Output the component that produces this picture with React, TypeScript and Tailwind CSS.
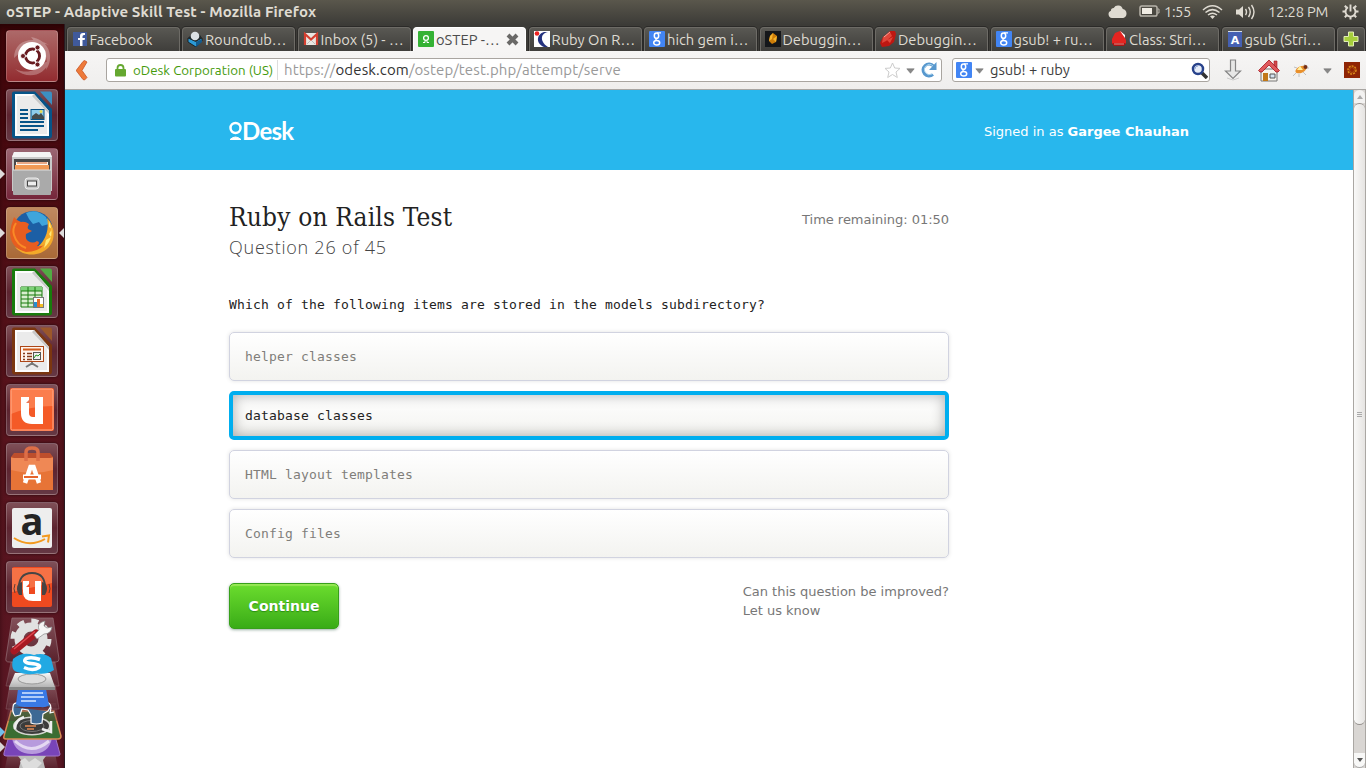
import React from "react";

type Kids = { children?: React.ReactNode };

/* ---------- top panel ---------- */

function TopPanel() {
  return (
    <header className="flex h-6 shrink-0 items-center bg-linear-to-b from-[#5a574c] to-[#3d3c38] pl-[6px] pr-[7px] font-['Ubuntu','Noto_Sans',sans-serif] text-[#dfdbd2]">
      <h1 className="whitespace-nowrap text-[15px] font-bold leading-6 tracking-[0.12px]">oSTEP - Adaptive Skill Test - Mozilla Firefox</h1>
      <div className="ml-auto flex items-center">
        <svg width="19" height="15" viewBox="0 0 19 15" fill="#dfdbd2">
          <path d="M4 14a3.8 3.8 0 0 1-1.100-7.300A2.800 2.800 0 0 1 5.700 4 5 5 0 0 1 14.800 5.100a4.600 4.600 0 0 1 .5 8.900z" />
        </svg>
        <svg className="-mt-px ml-3" width="21" height="12" viewBox="0 0 21 12" fill="none">
          <rect x="1" y="1" width="17" height="10" rx="1.800" stroke="#b8b4aa" strokeWidth="1.500" />
          <rect x="3" y="3" width="10" height="6" fill="#f1ede4" />
          <path d="M18.500 4h1.500v4h-1.500" stroke="#b8b4aa" />
        </svg>
        <span className="ml-[4px] w-[27px] whitespace-nowrap text-[14.7px] tracking-[-0.4px]">1:55</span>
        <svg className="ml-[11px]" width="21" height="16" viewBox="0 0 21 16" fill="none" stroke="#dfdbd2" strokeWidth="1.500">
          <path d="M1 6Q10.500-2.500 20 6" />
          <path d="M3.500 8.500q7-5.800 14 0" />
          <path d="M6 11q4.500-3.600 9 0" />
          <path d="M8 12.300q2.500-1.500 5 0l-2.500 2.800z" fill="#dfdbd2" stroke="none" />
        </svg>
        <svg className="ml-3" width="21" height="16" viewBox="0 0 21 16" fill="none" stroke="#dfdbd2" strokeWidth="1.400">
          <path d="M1 5.500h3l4-3.500v12l-4-3.500H1z" fill="#dfdbd2" stroke="none" />
          <path d="M10.500 5q2 3 0 6M13.500 3q3.500 5 0 10M16.500 1q5 7 0 14" />
        </svg>
        <span className="ml-[12px] w-[61px] whitespace-nowrap text-[14.7px] tracking-[-0.2px]">12:28 PM</span>
        <svg className="ml-[13px]" width="17" height="17" viewBox="0 0 17 17" fill="none" stroke="#dfdbd2">
          <path d="M6 4.300a5 5 0 1 0 5 0M8.500 1.500v7" strokeWidth="1.900" />
          <path d="M3.500 8.500H.5M16.500 8.500h-3M5 12l-2.200 2.200M12 12l2.200 2.200M8.500 13.500v3M4.800 4.800 2.800 2.800M12.200 4.800l2-2" strokeWidth="2" />
        </svg>
      </div>
    </header>
  );
}

/* ---------- launcher ---------- */

function Tile({ tone, children }: Kids & { tone: string }) {
  return (
    <div className={`h-[52px] w-[52px] shrink-0 rounded-[4px] border border-white/20 shadow-[0_0_3px_rgba(0,0,0,0.6)] ${tone}`}>
      <svg className="-ml-px -mt-px block overflow-visible" width="52" height="52" viewBox="0 0 52 52">{children}</svg>
    </div>
  );
}

function Doc({ color, corner, children }: Kids & { color: string; corner: string }) {
  return (
    <>
      <path d="M8 2.500q-2 0-2 2v42q0 3 2.500 3H43q3 0 3-3V20L29 2.500z" fill={color} />
      <path d="M9 5H28L43 22v25H9z" fill="#fdfdfd" />
      <path d="M11 7h16l14 17v21H11z" fill="#ebebeb" />
      <path d="M28 5l15 17v3L26 7z" fill="#c8c8c8" />
      <path d="M34 2.500h10q2 0 2 2V16z" fill={corner} />
      {children}
    </>
  );
}

const glass = "bg-linear-to-b from-[#7f5058] via-[#5d2430] to-[#653844]";

function FoldedStack() {
  return (
    <svg className="block shrink-0" width="65" height="152" viewBox="0 0 65 152">
      <defs>
        <linearGradient id="pane" x2="0" y2="1">
          <stop stopColor="#9a7078" stopOpacity=".65" />
          <stop offset="1" stopColor="#5a2832" stopOpacity=".65" />
        </linearGradient>
        <linearGradient id="silver" x2="0" y2="1">
          <stop stopColor="#f7f7f7" />
          <stop offset="1" stopColor="#b5b5b5" />
        </linearGradient>
      </defs>
      <path d="M9 132h45l4 20H5z" fill="url(#pane)" />
      <path d="M9 120h46l5 18q0 2-2 2H6q-3 0-2-3z" fill="#7844b8" stroke="#a274c5" />
      <path d="M12 122h40q-3 16-20 16t-20-16z" fill="#b79add" />
      <path d="M15 125q16 15 34 0" stroke="#e4d8f2" strokeWidth="3" fill="none" />
      <path d="M18 140h28l-3 4 2 8H19l2-8z" fill="#bdbdbd" />
      <path d="M20 145l5-3 4 4 6-4 7 5-5 5H23z" fill="#dddddd" />
      <path d="M11 95h43l7 25q0 3-3 3H6q-3 0-2-3z" fill="#3a6d32" stroke="#d98a54" strokeWidth="1.500" />
      <path d="M9 87h47l3 18H6z" fill="url(#pane)" opacity=".5" />
      <path d="M10 68h45l4 25H6z" fill="url(#pane)" stroke="#8d626a" strokeWidth=".5" />
      <path d="M11 46h44l4 24H6z" fill="url(#pane)" stroke="#8d626a" strokeWidth=".5" />
      <ellipse cx="32" cy="110" rx="19" ry="9.500" fill="#d3d5d0" />
      <ellipse cx="32" cy="110" rx="17" ry="8" fill="#3b3c3b" />
      <ellipse cx="32" cy="110" rx="12" ry="5.500" fill="none" stroke="#777" />
      <path d="M25 110h11M27 113h7" stroke="#e28b56" strokeWidth="1.500" />
      <path d="M51 105v11l-9-3M15 113q0-9 9-12" stroke="#eeeeee" strokeWidth="2.500" fill="none" />
      <path d="M13 91q0-5 6-4l6 3q6-4 13-1l7-3q6 0 6 6l-1 5 4-1M13 91q-1 5 2 9l5-1 2-6 6 1 3 5 0 8q5 2 11 0l1-9 5-3 3-5" fill="#3d6994" stroke="#fff" strokeWidth="1.200" strokeLinejoin="round" />
      <path d="M18 73h28l3 16q-4 3-8 2l-15 0q-7 0-10-3z" fill="#3979e5" />
      <path d="M22 77h21M21 81h23M21 85h15" stroke="#d8e7ff" strokeWidth="1.500" />
      <path d="M15 57h35l5 14H9z" fill="url(#silver)" />
      <path d="M9 71h46v3H9z" fill="#858585" />
      <ellipse cx="32" cy="63" rx="14" ry="5" fill="#ddd" stroke="#999" />
      <path d="M12 2h41l6 41q0 3-3 3H9q-4 0-3-4z" fill="url(#pane)" stroke="#95727a" strokeWidth=".7" />
      <circle cx="31" cy="23" r="12" fill="none" stroke="#e1e1e1" strokeWidth="9" />
      <circle cx="31" cy="23" r="18" fill="none" stroke="#e1e1e1" strokeWidth="5" strokeDasharray="7 7.100" />
      <path d="M14 35 36 17" stroke="#a71922" strokeWidth="7" strokeLinecap="round" />
      <path d="M14 33 35 15.500" stroke="#de4850" strokeWidth="1.500" />
      <path d="M34 19l5-5q-2-6 3-8l3-1-1 5 3 2 5-1q-1 7-8 7l-7 5z" fill="#f5f5f5" stroke="#888" strokeWidth=".7" />
      <path d="M13 43q9-8 21-4 10-3 17 3l3 12q-8 5-17 3.500-9 2-18-1-9-1-6-13.500z" fill="#22a9e3" />
      <path d="M40 43.500q-8-3-14-1-4 4 5 5 11 1 8 4-6 4-15 0" stroke="#fff" strokeWidth="3.500" fill="none" />
      <path d="M0 111l5 5-5 5z" fill="#72c0ed" />
      <path d="M0 126l5 5-5 5z" fill="#d8d5d5" />
    </svg>
  );
}

function Pip({ side }: { side: "left" | "right" }) {
  return (
    <svg className={side === "left" ? "absolute -left-[6px] top-[21px]" : "absolute -right-[6px] top-[21px]"} width="5" height="10" viewBox="0 0 5 10">
      <path d={side === "left" ? "M0 0l5 5-5 5z" : "M5 0L0 5l5 5z"} fill="#dedbdb" />
    </svg>
  );
}

function Launcher() {
  return (
    <nav className="flex w-[65px] shrink-0 flex-col border-r border-[#281b22] bg-linear-to-b from-[#410509] via-[#58131c] to-[#591724] shadow-[inset_0_4px_5px_rgba(20,0,0,0.5)]">
      <div className="flex flex-col gap-[7px] pb-[3px] pl-[6px] pt-[6px]">
        <Tile tone="bg-linear-to-b from-[#ad6969] to-[#922b30]">
          <path d="M8 28C8 10 27 5 43 15q-14-6-23 2M25 7c18 3 24 20 15 33 3-13-2-19-8-24M44 30C38 48 20 49 9 39c12 5 20 2 25-4" fill="#fff" opacity=".27" />
          <circle cx="26" cy="26" r="14" fill="#fff" />
          <circle cx="26.500" cy="26" r="7" fill="none" stroke="#681b20" strokeWidth="3" />
          <path d="M25 26l-9 0M26 26l5-8M26 26l5 8" stroke="#fff" strokeWidth="1.600" />
          <circle cx="26.500" cy="26" r="5.300" fill="#fff" />
          <g fill="#681b20" stroke="#fff" strokeWidth=".8"><circle cx="17" cy="26" r="2.500" /><circle cx="31.500" cy="17.500" r="2.500" /><circle cx="31.500" cy="34.500" r="2.500" /></g>
        </Tile>
        <Tile tone={glass}>
          <Doc color="#075488" corner="#3c8fc1">
            <path d="M14 21h8M14 25h8M14 29h8M14 33h24M14 37h24M14 41h18" stroke="#075488" strokeWidth="2" />
            <rect x="25" y="20.500" width="13" height="10" fill="#8dccec" stroke="#075488" />
            <path d="M26 30v-3l4-3 3 2 2-2 3 4v2z" fill="#454b4c" /><circle cx="35" cy="22.500" r="1.500" fill="#e8db54" />
          </Doc>
        </Tile>
        <div className="relative h-[52px] w-[52px]">
          <Tile tone="bg-linear-to-b from-[#9a6672] to-[#75253a]">
            <path d="M8 4h36l2 5v34H6V9z" fill="#c9c9c9" /><path d="M8 4h36l2 5H6z" fill="#f4f4f4" />
            <path d="M8 11h36v12H8z" fill="#4a4848" /><path d="M10 14h32v9H10z" fill="#fff6ed" /><path d="M9 17h34v6H9z" fill="#f29a55" /><path d="M11 15h30" stroke="#d55f23" />
            <path d="M7 22h38v24q0 1-1 1H8q-1 0-1-1z" fill="#aaa" /><path d="M7 22h38" stroke="#ddd" />
            <rect x="19" y="30" width="14" height="11" rx="3" fill="#c7c7c7" stroke="#ededed" /><rect x="21.500" y="33" width="9" height="5" fill="#eee" stroke="#444" />
          </Tile>
          <Pip side="left" />
        </div>
        <div className="relative h-[52px] w-[52px]">
          <Tile tone="bg-linear-to-b from-[#bf8960] to-[#a96937]">
            <circle cx="27" cy="24" r="20" fill="#1c5fa5" />
            <path d="M20 6q10-5 20 4l3 7-7 2-3-4-6 2-4-5z" fill="#3fa5dc" />
            <path d="M41 11c8 8 9 21 2 29-9 10-26 10-34 0 13 7 22 3 28-6 4-6 6-14 4-23z" fill="#f4a929" />
            <path d="M43 14q7 16-5 27l2-8 5-3-2-3 3-5-3-2z" fill="#ffe977" />
            <path d="M8 10q3 4 7 5 4-1 8 2 -2 3-1 5l4 2-6 3q-1 5 2 7 5 3 9 0 4 1 0 5 5 1 8-2Q32 45 20 45 4 41 4 25q1-7 4-15z" fill="#e75d20" />
            <path d="M10 16q-4 6-2 12 3 10 12 13" fill="none" stroke="#fa8a26" strokeWidth="2" />
          </Tile>
          <Pip side="left" /><Pip side="right" />
        </div>
        <Tile tone={glass}>
          <Doc color="#187b0c" corner="#52ac44">
            <path d="M15 21h21v20H15z" fill="#d9efcf" stroke="#187b0c" /><path d="M15 21h21v4H15z" fill="#7fd17a" /><path d="M15 25h21M15 29h21M15 33h21M15 37h21M22 21v20M29 21v20" stroke="#187b0c" />
            <rect x="27.500" y="31.500" width="10" height="10" fill="white" stroke="#777" /><path d="M28 36h3v5h-3z" fill="#258fd0" /><path d="M31 33h3v8h-3z" fill="#e46c27" /><path d="M34 38h3v3h-3z" fill="#f2bd24" />
          </Doc>
        </Tile>
        <Tile tone={glass}>
          <Doc color="#7b3610" corner="#9b572a">
            <rect x="14.500" y="21.500" width="23" height="15" fill="#fff4ec" stroke="#ad4616" /><path d="M17 24.500h18" stroke="#cf5a1b" strokeWidth="2" />
            <path d="M17 28.500h2m2 0h5m-9 3h2m2 0h5m-9 3h2m2 0h5" stroke="#843a19" strokeWidth="1.500" /><rect x="27.500" y="27.500" width="7" height="7" fill="#eee" stroke="#555" /><path d="M28 33l2-3 2 1 2-2" fill="none" stroke="#21961f" /><path d="M26 37v3m-6 2l5-3h2l5 3" stroke="#777" strokeWidth="2" fill="none" />
          </Doc>
        </Tile>
        <Tile tone={glass}>
          <rect x="4" y="4" width="44" height="43" rx="2" fill="#f45a27" /><path d="M5 5h42v17Q25 22 5 30z" fill="#ff9162" opacity=".65" /><rect x="5" y="5" width="42" height="41" rx="1.500" fill="none" stroke="#ffad8c" />
          <path d="M15 13h8v5h-3l3-3v14q0 4 4 4h2V13h8v27H26q-11 0-11-11z" fill="#fff" /><path d="M20 19l4-4v4z" fill="#e97754" />
        </Tile>
        <Tile tone={glass}>
          <path d="M5 14h42v33H5z" fill="#e77437" /><path d="M5 14l3-4h36l3 4-3 1H8z" fill="#bd4e2c" /><path d="M5 15h42v12q-20 6-42 0z" fill="#ef8855" />
          <path d="M20 18V9q0-4 6-4t6 4v9" stroke="#dd6e47" strokeWidth="3.500" fill="none" />
          <path d="M19 40l5.500-16h3L33 40" stroke="#fff" strokeWidth="4.500" fill="none" /><path d="M17 34h18" stroke="#fff" strokeWidth="5" /><path d="M18 34h14" stroke="#e6642b" strokeWidth="2" />
        </Tile>
        <Tile tone={glass}>
          <rect x="6" y="6" width="40" height="40" rx="2" fill="#eee" />
          <text x="26" y="33" textAnchor="middle" fontFamily="Open Sans, sans-serif" fontWeight="700" fontSize="38" fill="#242424">a</text>
          <path d="M8 36q15 10 31 1M36 34.500l7-1-1 7" fill="none" stroke="#f39a20" strokeWidth="2" />
        </Tile>
        <Tile tone={glass}>
          <rect x="6" y="6" width="40" height="40" rx="2" fill="#ef4a20" /><path d="M6 7h40v15L6 31z" fill="#fa8255" opacity=".7" />
          <path d="M17 20h6v13h6V20h6v20h-8q-10 0-10-9z" fill="#fff" /><path d="M20 26l4-4v4z" fill="#f4522b" /><path d="M13 29q-1-17 13-17t13 17" stroke="#454545" strokeWidth="2" fill="none" /><path d="M13 22q-4 5 0 12h3V21zM39 22q4 5 0 12h-3V21z" fill="#484343" /><path d="M9 23q-2 5 0 9M43 23q2 5 0 9" stroke="#5c3d36" fill="none" />
        </Tile>
      </div>
      <FoldedStack />
    </nav>
  );
}

/* ---------- site icons ---------- */

function GoogleIcon() {
  return (
    <svg width="16" height="16" viewBox="0 0 16 16">
      <rect width="16" height="16" rx="1" fill="#4285f4" />
      <ellipse cx="7.500" cy="4.700" rx="2.200" ry="2.600" stroke="#fff" strokeWidth="1.500" fill="none" />
      <path d="M8 1.900h4M7.500 7.300q-1.500 1 .5 2" stroke="#fff" strokeWidth="1.300" fill="none" />
      <ellipse cx="7.700" cy="11.700" rx="3" ry="2.300" stroke="#fff" strokeWidth="1.500" fill="none" />
    </svg>
  );
}

const siteIcons: Record<string, React.ReactNode> = {
  facebook: <svg width="14" height="14" viewBox="0 0 14 14"><path fill="#405a9b" d="M0 0h14v14H0z" /><path fill="#fff" d="M7 14V8H5V6h2V4q0-3 3-3h2v2h-1q-1.500 0-1.500 1.500V6H12l-.4 2H9.500v6z" /></svg>,
  cube: <svg width="16" height="16" viewBox="0 0 16 16"><path d="M1 7l7 3 7-3v3l-6 6-8-5z" fill="#2c9ad6" stroke="#111" strokeWidth=".8" /><path d="M1 7l4-4 8 1 2 3-6 4z" fill="#22292c" /><circle cx="8" cy="5" r="4.300" fill="#dce1e4" /><path d="M9 11v5l6-5V8z" fill="#135b8e" /></svg>,
  mail: <svg width="16" height="14" viewBox="0 0 16 14"><path d="M1 1h14v12H1z" fill="#e9e7e2" /><path d="M2 13V2l6 5.500L14 2v11" fill="none" stroke="#d54031" strokeWidth="2.200" /><path d="M4 12l3-3M12 12L9 9" stroke="#bbb" /></svg>,
  ostep: <svg width="16" height="16" viewBox="0 0 16 16"><rect width="16" height="16" rx="1" fill="#35b234" /><circle cx="8" cy="7" r="2.400" fill="none" stroke="#fff" strokeWidth="1.300" /><path d="M5 11.500h2V10m4 1.500H9V10" stroke="#fff" fill="none" /></svg>,
  rails: <svg width="16" height="16" viewBox="0 0 16 16"><path fill="#fff" d="M0 0h16v16H0z" /><path d="M14 1C7 2 5 10 14 16h-4C1 12 3 3 10 1z" fill="#24327e" /><circle cx="3" cy="2.500" r="2.300" fill="#ee2222" /></svg>,
  google: <GoogleIcon />,
  amber: <svg width="16" height="16" viewBox="0 0 16 16"><path fill="#15171a" d="M0 0h16v16H0z" /><path d="M8 2l4 3-1 6-4 2-3-3 1-5z" fill="#cc7c08" /><path d="M8 2l-1 6-3 2 1-5zM8 8l3 3 1-6z" fill="#f5b42d" /></svg>,
  ruby: <svg width="16" height="16" viewBox="0 0 16 16"><path d="M10 0h5l1 3-2 8-5 4-7 1-2-4 3-6z" fill="#bd1712" /><path d="M10 1l2 4-6 5-4 2 1-6zM13 6l-3 6-3-3z" fill="#e0463a" /><path d="M4 6l6-5" stroke="#f2a49a" /></svg>,
  class: <svg width="16" height="16" viewBox="0 0 16 16"><path d="M4 2l5-2 2 1 4 8v4H1V8z" fill="#e42420" /><path d="M9 0l5 4v3z" fill="#fff" /><path d="M1 12h14l-2 3H3z" fill="#a81515" /><path d="M3 13h10" stroke="#ef8a84" /></svg>,
  letter: <svg width="16" height="16" viewBox="0 0 16 16"><path fill="#4560b2" d="M1 1h14v15H1z" /><path d="M1 .5h14" stroke="#d8dfe8" /><text x="8" y="13" textAnchor="middle" fontFamily="DejaVu Sans" fontSize="11" fontWeight="bold" fill="#fff">A</text></svg>,
};

const tabs = [
  { icon: "facebook", title: "Facebook" },
  { icon: "cube", title: "Roundcub…" },
  { icon: "mail", title: "Inbox (5) - …" },
  { icon: "ostep", title: "oSTEP -…", active: true },
  { icon: "rails", title: "Ruby On R…" },
  { icon: "google", title: "hich gem i…" },
  { icon: "amber", title: "Debuggin…" },
  { icon: "ruby", title: "Debuggin…" },
  { icon: "google", title: "gsub! + ru…" },
  { icon: "class", title: "Class: Stri…" },
  { icon: "letter", title: "gsub (Stri…" },
];

const tabShape = "flex h-6 items-center whitespace-nowrap rounded-t-[4px] border border-b-0";
const darkTab = "border-[#6d6b66] bg-linear-to-b from-[#595853] to-[#3f3e3b] text-[#dfdbd2] shadow-[0_0_0_1px_#2b2a28]";
const lightTab = "border-white bg-[#f6f5f4] text-[#4c4c4c]";

function TabStrip() {
  return (
    <div className="flex h-[27px] shrink-0 items-end gap-[2.5px] overflow-hidden bg-[#3c3b37] pl-[1.5px] font-['Ubuntu','Noto_Sans',sans-serif] text-[14.7px]">
      {tabs.map((t, i) => (
        <div key={i} className={`${tabShape} w-[113px] shrink-0 pl-1 ${t.active ? lightTab : darkTab}`}>
          <span className="mb-[2px] flex w-[16px] shrink-0 justify-center">{siteIcons[t.icon]}</span>
          <span className="ml-[2px] mt-px tracking-[0px]">{t.title}</span>
          {t.active && (
            <svg className="mb-px ml-auto mr-[6px]" width="13" height="13" viewBox="0 0 13 13"><path d="M2 2l9 9M11 2l-9 9" stroke="#6a6967" strokeWidth="4" /></svg>
          )}
        </div>
      ))}
      <div className={`${tabShape} ${darkTab} w-[28px] shrink-0 justify-center`}>
        <svg className="mb-px" width="16" height="16" viewBox="0 0 16 16"><path d="M5.500 1h5v4.500H15v5h-4.500V15h-5v-4.500H1v-5h4.500z" fill="#a6cf3c" stroke="#e1edb5" /></svg>
      </div>
    </div>
  );
}

function Caret() {
  return <svg width="9" height="6" viewBox="0 0 9 6"><path d="M.8.800h7.400l-3.700 4.500z" fill="#888" stroke="#666" strokeWidth=".5" /></svg>;
}

const field = "flex h-6 items-center rounded-[3px] border border-[#a9a5a0] bg-white";

function Toolbar() {
  return (
    <div className="flex h-[39px] shrink-0 items-center border-b border-[#a8a5a2] bg-linear-to-b from-[#f6f5f4] to-[#efeeed] pl-[10px] font-['Ubuntu','Noto_Sans',sans-serif] text-[#3c3c3c]">
      <svg width="14" height="22" viewBox="0 0 14 22"><path d="M9.500 1.500l2.500 1.500-5 8.500 5 7-2.500 2.500-1.500-.5-6.500-8.500v-1l6.500-8.500z" fill="#ee7a3a" stroke="#c95525" strokeWidth=".8" /></svg>
      <div className={`${field} ml-[17px] w-[836px] pl-2`}>
        <svg width="11" height="13" viewBox="0 0 11 13"><path d="M2.500 6V4q0-3 3-3t3 3v2" fill="none" stroke="#65a830" strokeWidth="1.800" /><rect y="5" width="11" height="7.500" rx="1" fill="#65a830" /></svg>
        <span className="ml-[7px] w-[141px] whitespace-nowrap pt-px text-[13.3px] tracking-[0.02px] text-[#459a0a]">oDesk Corporation (US)</span>
        <span className="ml-[3px] h-5 w-px bg-[#ddd]" />
        <span className="ml-[6px] whitespace-nowrap pt-px text-[15px] tracking-[0.14px] text-[#999]">https://<span className="text-[#333]">odesk.com</span>/ostep/test.php/attempt/serve</span>
        <span className="ml-auto flex items-center pr-[4px]">
          <svg width="17" height="17" viewBox="0 0 17 17"><path d="M8.500 1l2.200 5 5.300.4-4 3.600 1.300 5.500-4.800-3-4.800 3L5 10 1 6.400 6.300 6z" fill="#fff" stroke="#ccc" /></svg>
          <span className="ml-[5px] mt-[2px] flex"><Caret /></span>
          <svg className="ml-[6px]" width="16" height="16" viewBox="0 0 16 16"><path d="M12 12.500A6 6 0 1 1 12.500 4" fill="none" stroke="#5898ce" strokeWidth="3" /><path d="M15.500 0v8H8z" fill="#5898ce" /><path d="M11 12A5 5 0 1 1 12 4" fill="none" stroke="#acd6f0" /></svg>
        </span>
      </div>
      <div className={`${field} ml-[10px] w-[258px] pl-[3px]`}>
        <GoogleIcon />
        <span className="ml-[3px] mt-[2px] flex"><Caret /></span>
        <span className="ml-[6px] whitespace-nowrap pt-px text-[14.7px] tracking-[-0.05px]">gsub! + ruby</span>
        <svg className="ml-auto mr-px" width="17" height="17" viewBox="0 0 17 17"><path d="M11 11l5 5" stroke="#333" strokeWidth="3.500" /><circle cx="7" cy="7" r="5" fill="#e7edf8" stroke="#28428b" strokeWidth="2.500" /><path d="M4 7q0-3 3-3" stroke="#90a7d6" fill="none" /></svg>
      </div>
      <svg className="ml-[14px]" width="18" height="22" viewBox="0 0 18 22"><path d="M6.500 1h5v11h5L9 19.500 1.500 12h5z" fill="#e7e7e6" stroke="#858585" strokeWidth="1.200" /><path d="M3 19l6 2 6-2" fill="none" stroke="#ccc" /></svg>
      <svg className="ml-[15px]" width="24" height="23" viewBox="0 0 24 23"><path d="M4 10h16v12H4z" fill="#f6f4ed" stroke="#777" /><path d="M6 14h5v8H6z" fill="#c27818" /><path d="M13 15h5v4h-5z" fill="#d5e4f1" stroke="#555" /><path d="M17 2h3v7l-3-3z" fill="#d04a4e" stroke="#a51720" strokeWidth=".6" /><path d="M1.500 11.500L12 1l10.500 10.500-1.500 1.500H19l-7-7-7 7H3z" fill="#df595c" stroke="#a51720" strokeWidth=".8" /></svg>
      <svg className="ml-[11px]" width="18" height="14" viewBox="0 0 18 14"><path d="M4 10l-3 3M7 11v3M11 9l3 3M12 3l1-2M15 5l2 0M5 5L2 4" stroke="#aaa" strokeWidth=".7" /><ellipse cx="9" cy="6.500" rx="6" ry="3.200" transform="rotate(-25 9 6.500)" fill="#e9902b" /><path d="M5 7l3-4 3 4z" fill="#fff0a0" /><circle cx="13.500" cy="4" r="2" fill="#753016" /></svg>
      <span className="ml-[13px] mt-[2px] flex"><Caret /></span>
      <svg className="ml-[12px]" width="16" height="16" viewBox="0 0 16 16"><path fill="#8f2505" d="M0 0h16v16H0z" /><circle cx="8" cy="8" r="4" fill="none" stroke="#df8c19" strokeWidth="1.500" strokeDasharray="2 1" /><circle cx="8" cy="8" r="2.500" fill="none" stroke="#c56a13" strokeWidth=".6" /></svg>
    </div>
  );
}

/* ---------- page ---------- */

function Logo() {
  return (
    <div className="flex items-center text-white">
      <svg className="-mt-px" width="14" height="20" viewBox="0 0 14 20"><circle cx="6.500" cy="7" r="5" fill="none" stroke="#fff" strokeWidth="2.500" /><path d="M1 18.500q5.500-5 11 0z" fill="#fff" stroke="#fff" /></svg>
      <span className="-ml-px font-['Lato',sans-serif] text-[24px] font-bold leading-6 tracking-[-0.7px]">Desk</span>
    </div>
  );
}

function Answer({ text, selected }: { text: string; selected?: boolean }) {
  const look = selected
    ? "border-4 border-[#00aeef] pl-3 text-[#222] shadow-[inset_0_0_14px_rgba(0,0,0,0.32)]"
    : "border border-[#d1d3e0] pl-[15px] text-[#807e7a] shadow-[0_0_4px_rgba(0,0,0,0.12)]";
  return (
    <li className={`flex h-[49px] items-center rounded-[5px] bg-linear-to-b from-white to-[#f3f3f0] font-['DejaVu_Sans_Mono',monospace] text-[13px] tracking-[0.174px] ${look}`}>{text}</li>
  );
}

function Page() {
  return (
    <main className="min-w-0 flex-1 bg-white font-['DejaVu_Sans',sans-serif] text-[13px]">
      <div className="h-20 bg-[#28b7ed] pl-[164px]">
        <div className="flex h-20 w-[960px] items-center justify-between pt-[2px]">
          <Logo />
          <p className="whitespace-nowrap pt-[2px] text-white">Signed in as <b>Gargee Chauhan</b></p>
        </div>
      </div>
      <section className="ml-[164px] w-[720px] pt-[30px]">
        <div className="flex justify-between">
          <h2 className="whitespace-nowrap font-['DejaVu_Serif_Condensed','DejaVu_Serif',serif] text-[26px] leading-[34px] tracking-[0.17px] text-[#222]">Ruby on Rails Test</h2>
          <p className="pt-[10px] leading-[19px] tracking-[-0.03px] text-[#777]">Time remaining: 01:50</p>
        </div>
        <p className="font-['Open_Sans',sans-serif] text-[18px] font-light leading-[27px] tracking-[0.75px] text-[#444]">Question 26 of 45</p>
        <p className="mt-[34px] whitespace-nowrap font-['DejaVu_Sans_Mono',monospace] leading-5 tracking-[0.174px] text-[#222]">Which of the following items are stored in the models subdirectory?</p>
        <ul className="mt-[17px] flex flex-col gap-[10px]">
          <Answer text="helper classes" />
          <Answer text="database classes" selected />
          <Answer text="HTML layout templates" />
          <Answer text="Config files" />
        </ul>
        <div className="mt-[24px] flex items-start justify-between">
          <button className="mt-px h-[46px] w-[110px] rounded-[5px] border border-[#37a01a] bg-linear-to-b from-[#6bdd2e] to-[#39ac17] text-[14px] font-bold text-white shadow-[inset_0_2px_1px_rgba(180,240,110,0.6),0_1px_3px_rgba(0,60,30,0.4)] [text-shadow:0_1px_1px_#2b8f12]">Continue</button>
          <p className="leading-[19px] text-[#777]">Can this question be improved?<br />Let us know</p>
        </div>
      </section>
    </main>
  );
}

function ScrollBar() {
  return (
    <div className="flex w-[13px] shrink-0 flex-col border-x border-[#aaa7a3] bg-[#d9d6d3]">
      <div className="flex h-[13px] items-center justify-center rounded-t-full bg-[#f3f2f1]"><svg width="6" height="4" viewBox="0 0 6 4"><path d="M3 0l3 4H0z" fill="#aaa" /></svg></div>
      <div className="flex h-[622px] flex-col items-center justify-center gap-px rounded-full border-y border-[#96928e] bg-linear-to-r from-[#f9f9f8] to-[#e6e4e2]">
        <i className="h-px w-[5px] bg-[#aaa]" /><i className="h-px w-[5px] bg-[#aaa]" /><i className="h-px w-[5px] bg-[#aaa]" />
      </div>
      <div className="mt-auto flex h-[15px] items-center justify-center rounded-b-full border-b border-[#aaa] bg-[#f8f8f7]"><svg width="6" height="4" viewBox="0 0 6 4"><path d="M0 0h6L3 4z" fill="#555" /></svg></div>
    </div>
  );
}

export default function App() {
  return (
    <div className="flex h-[768px] w-[1366px] flex-col overflow-hidden">
      <TopPanel />
      <div className="flex min-h-0 flex-1">
        <Launcher />
        <div className="flex min-w-0 flex-1 flex-col">
          <TabStrip />
          <Toolbar />
          <div className="flex min-h-0 flex-1">
            <Page />
            <ScrollBar />
          </div>
        </div>
      </div>
    </div>
  );
}
